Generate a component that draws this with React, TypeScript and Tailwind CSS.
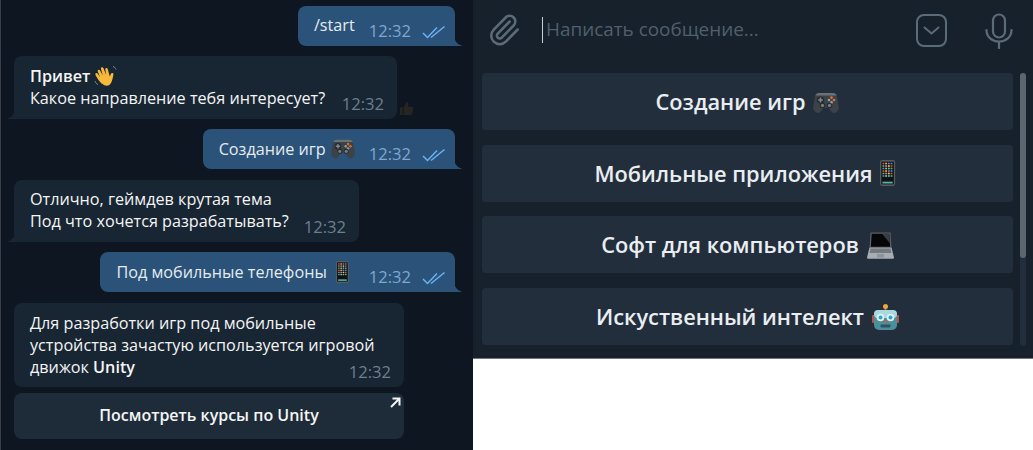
const font = "font-['Open_Sans',sans-serif]";

function Checks() {
  return (
    <svg width="24" height="14" viewBox="0 0 24 14" fill="none" stroke="#6ab2f2" strokeWidth="1.5" className="ml-[11px] mt-[3px] shrink-0">
      <path d="M1 8l4.500 4.500L15 2.500" />
      <path d="M9 12.500L22.500 1.500" />
    </svg>
  );
}

function Gamepad({ size = 24 }: { size?: number }) {
  return (
    <svg width={size} height={size} viewBox="0 0 26 26" className="inline-block shrink-0">
      <path d="M6 3h14c2.500 0 3.500 1.500 4 3.500l1.700 10c.6 3.500-1.700 6.500-4.500 6.500-1.700 0-2.700-1-3.700-2.500L15.500 18h-5l-2 2.500c-1 1.500-2 2.500-3.700 2.500C2 23-.3 20 .3 16.500L2 6.500C2.500 4.500 3.500 3 6 3z" fill="#3c4348" />
      <path d="M6 3h14c2 0 3 1 3.600 2.500H2.400C3 4 4 3 6 3z" fill="#6a7277" />
      <circle cx="7.500" cy="10" r="3.600" fill="#24292d" />
      <path d="M6.700 7.600h1.600v1.600h1.600v1.600H8.300v1.600H6.700v-1.600H5.100V9.200h1.600z" fill="#80888d" />
      <circle cx="18.500" cy="7.600" r="1.300" fill="#ef6c2b" />
      <circle cx="21" cy="10" r="1.300" fill="#ef6c2b" />
      <circle cx="16" cy="10" r="1.300" fill="#969ea3" />
      <circle cx="18.500" cy="12.400" r="1.300" fill="#969ea3" />
      <circle cx="9.500" cy="15.500" r="2.700" fill="#23282c" />
      <circle cx="9.500" cy="15.500" r="1.700" fill="#747c81" />
      <circle cx="16.500" cy="15.500" r="2.700" fill="#23282c" />
      <circle cx="16.500" cy="15.500" r="1.700" fill="#747c81" />
    </svg>
  );
}

function Phone({ h = 24 }: { h?: number }) {
  const colors = ["#d9534f", "#5bc0de", "#f0ad4e", "#5cb85c", "#a06cd5", "#e57ab0", "#4a90d9", "#e8d44d", "#8fd16f"];
  const cells = [];
  for (let r = 0; r < 6; r++) {
    for (let c = 0; c < 4; c++) {
      cells.push(<rect key={`${r}-${c}`} x={2.300 + c * 2.500} y={2.500 + r * 2.300} width="1.700" height="1.500" fill={colors[(r * 3 + c * 2) % 9]} />);
    }
  }
  return (
    <svg width={(h * 14) / 24} height={h} viewBox="0 0 14 24" className="inline-block shrink-0">
      <rect x="0" y="0" width="14" height="24" rx="2" fill="#565c61" />
      <rect x="1.200" y="1.500" width="11.600" height="21" fill="#101214" />
      {cells}
      <rect x="2.300" y="20" width="9.400" height="1.700" fill="#57b2a8" />
    </svg>
  );
}

function Wave() {
  return (
    <svg width="24" height="24" viewBox="0 0 24 24" className="inline-block shrink-0">
      <path d="M8 20c-3-3-5-6-6.500-9-.8-1.700 1.200-2.600 2.200-1.200L6 13 3.800 7.500C3.100 5.800 5.300 5 6.100 6.500L8.800 11.500 7 5c-.5-1.800 1.800-2.400 2.500-.8l2.700 6.800-.9-5.300c-.3-1.800 2-2.200 2.500-.5l2 7.300 1-2.600c.7-1.700 3-1 2.600.8-.8 3.500-1 6-2.400 8.300-2.500 4.200-6.200 3-9 .5z" fill="#f7b83c" />
      <path d="M19 2.500c1.500.5 2.500 1.500 3 3M1 17c.5 1.800 1.500 3 3 3.500" stroke="#7c8894" strokeWidth="1" fill="none" />
    </svg>
  );
}

function Laptop() {
  return (
    <svg width="27" height="27" viewBox="0 0 27 27" className="inline-block shrink-0">
      <path d="M3.500 0.500h20l1 15h-22z" fill="#5a6066" />
      <path d="M4.700 1.800h17.600l.8 13H3.900z" fill="#050607" />
      <path d="M15 1.800h7.300l.6 9.500z" fill="#383d42" />
      <path d="M2.500 15.500h22l2.500 10c0 .8-.5 1.200-1 1.200H1c-.5 0-1-.4-1-1.200z" fill="#a7adb2" />
      <path d="M3.500 16.500h20l1 4.500H2.500z" fill="#73797e" />
      <rect x="10" y="22" width="7" height="3.500" fill="#8e9499" />
    </svg>
  );
}

function Robot() {
  return (
    <svg width="27" height="26" viewBox="0 0 27 26" className="inline-block shrink-0">
      <rect x="12.700" y="3" width="1.600" height="4" fill="#8a8f93" />
      <circle cx="13.500" cy="2.500" r="2.500" fill="#f0a63a" />
      <rect x="0" y="11" width="3.500" height="8" rx="1" fill="#b8514c" />
      <rect x="23.500" y="11" width="3.500" height="8" rx="1" fill="#b8514c" />
      <rect x="2" y="6" width="23" height="20" rx="5" fill="#4b8f9b" />
      <rect x="2" y="6" width="23" height="8" rx="4" fill="#a9d8de" />
      <circle cx="8.500" cy="13.500" r="3.800" fill="#dff2f4" />
      <circle cx="18.500" cy="13.500" r="3.800" fill="#dff2f4" />
      <circle cx="8.500" cy="13.500" r="2" fill="#2fa8c4" />
      <circle cx="18.500" cy="13.500" r="2" fill="#2fa8c4" />
      <path d="M13.500 15l2 3.500h-4z" fill="#d9534f" />
      <rect x="8.500" y="20.500" width="10" height="3" rx="1" fill="#2b5560" />
    </svg>
  );
}

function Thumb() {
  return (
    <svg width="15" height="15" viewBox="0 0 16 16">
      <path d="M1 7h3v8H1zM5 7l3-6c1.500 0 2.200 1 2 2.500L9.500 6H14c1 0 1.500 1 1.300 1.800l-1.300 6c-.2.800-.7 1.200-1.500 1.200H5z" fill="#262522" />
    </svg>
  );
}

function OutBubble({ children, textTop = "mt-[7px]" }: { children: React.ReactNode; textTop?: string }) {
  return (
    <div className="relative self-end mr-[18px] h-[40px] bg-[#2b5278] rounded-tl-[8px] rounded-tr-[8px] rounded-bl-[8px] flex items-start pl-[16px] pr-[9px]">
      <div className={`flex items-center text-[16.200px] text-[#e4ecf2] h-[24px] leading-[24px] whitespace-nowrap ${textTop}`}>{children}</div>
      <span className="ml-[14px] mt-[13px] text-[16.600px] leading-[24px] text-[#7da8d3]">12:32</span>
      <div className="mt-[16px]"><Checks /></div>
      <svg width="8" height="12" viewBox="0 0 8 12" className="absolute -right-[7px] bottom-0">
        <path d="M0 0c0 6 2.500 10 7.500 11.500.5.300.2.500-.5.500H0z" fill="#2b5278" />
      </svg>
    </div>
  );
}

function InBubble({ className, children }: { className: string; children: React.ReactNode }) {
  return (
    <div className={`relative ml-[13px] bg-[#182533] rounded-tl-[8px] rounded-tr-[8px] rounded-br-[8px] pl-[16px] text-[16.200px] text-[#f5f5f5] leading-[22px] ${className}`}>
      {children}
      <svg width="8" height="12" viewBox="0 0 8 12" className="absolute -left-[7px] bottom-0">
        <path d="M8 0c0 6-2.500 10-7.500 11.500-.5.300-.2.500.5.500h7z" fill="#182533" />
      </svg>
    </div>
  );
}

function KeyButton({ children }: { children: React.ReactNode }) {
  return (
    <div className="h-[57px] pt-[2px] flex items-center justify-center gap-[8px] bg-[#232e3c] rounded-[4px] text-[21.800px] font-semibold text-[#e9eef2] whitespace-nowrap">
      {children}
    </div>
  );
}

export default function App() {
  return (
    <div className={`w-[1033px] h-[450px] overflow-hidden flex bg-white ${font}`}>
      {/* Chat column */}
      <div className="w-[473px] h-[450px] bg-[#0e1621] border-l border-[#3b4048] flex flex-col pt-[6px]">
        <OutBubble>/start</OutBubble>

        <InBubble className="mt-[10px] w-[383px] h-[63px] pt-[8px]">
          <div className="flex items-center gap-[4px] h-[23px] font-semibold"><span>Привет</span><Wave /></div>
          <div>Какое направление тебя интересует?</div>
          <span className="absolute right-[13px] bottom-[4px] text-[16.600px] text-[#6d7f8f]">12:32</span>
          <div className="absolute -right-[17px] bottom-[3px]"><Thumb /></div>
        </InBubble>

        <div className="mt-[10px] self-end"><OutBubble textTop="mt-[8px]">Создание игр <span className="ml-[5px] flex"><Gamepad /></span></OutBubble></div>

        <InBubble className="mt-[11px] w-[345px] h-[62px] pt-[8px]">
          <div>Отлично, геймдев крутая тема</div>
          <div>Под что хочется разрабатывать?</div>
          <span className="absolute right-[13px] bottom-[4px] text-[16.600px] text-[#6d7f8f]">12:32</span>
        </InBubble>

        <div className="mt-[10px] self-end"><OutBubble textTop="mt-[8px]">Под мобильные телефоны <span className="ml-[9px] mr-[6px] flex"><Phone h={22} /></span></OutBubble></div>

        <div className="relative mt-[11px] ml-[13px] w-[390px] h-[84px] bg-[#182533] rounded-[8px] pl-[16px] pt-[9px] text-[16.200px] text-[#f5f5f5] leading-[22px]">
          <div>Для разработки игр под мобильные</div>
          <div>устройства зачастую используется игровой</div>
          <div>движок <span className="font-semibold">Unity</span></div>
          <span className="absolute right-[13px] bottom-[4px] text-[16.600px] text-[#6d7f8f]">12:32</span>
        </div>

        <div className="relative mt-[6px] ml-[13px] w-[390px] h-[46px] pb-[3px] bg-[#1e2c3a] rounded-[8px] flex items-center justify-center text-[16px] font-semibold text-[#f5f5f5]">
          Посмотреть курсы по Unity
          <svg width="11" height="11" viewBox="0 0 11 11" className="absolute right-[3px] top-[4px]" fill="none" stroke="#f2f5f7" strokeWidth="2">
            <path d="M2.500 1.500h7v7M9.500 1.500L1 10" />
          </svg>
        </div>
      </div>

      {/* Input panel */}
      <div className="w-[560px] h-[359px] bg-[#17212b] border-b border-[#6f7780] flex flex-col">
        <div className="h-[64px] flex items-center relative pl-[14px]">
          <svg width="34" height="34" viewBox="0 0 24 24" fill="none" stroke="#5b6b78" strokeWidth="1.800" strokeLinecap="round" strokeLinejoin="round" className="shrink-0 -mt-[4px]">
            <path d="m16 6-8.414 8.586a2 2 0 0 0 2.829 2.829l8.414-8.586a4 4 0 1 0-5.657-5.657l-8.379 8.551a6 6 0 1 0 8.485 8.485l8.379-8.551" />
          </svg>
          <div className="ml-[21px] w-px h-[26px] bg-[#c9d0d6] -mt-[5px]" />
          <span className="ml-[3px] text-[18.900px] text-[#505f6e] -mt-[5px]">Написать сообщение...</span>
          <svg width="34" height="34" viewBox="0 0 34 34" fill="none" stroke="#5b6b78" strokeWidth="2" className="ml-auto -mt-[4px] shrink-0">
            <rect x="2" y="2" width="29" height="31" rx="7" />
            <path d="M9.500 14.500l7 6 7-6" strokeLinecap="round" strokeLinejoin="round" />
          </svg>
          <svg width="28" height="36" viewBox="0 0 28 36" fill="none" stroke="#5b6b78" strokeWidth="2.200" className="ml-[36px] mr-[20px] -mt-[2px] shrink-0">
            <rect x="8" y="1.500" width="12" height="23" rx="6" />
            <path d="M1.500 17c0 7 5.500 11.500 12.500 11.500S26.500 24 26.500 17M14 28.500V35" strokeLinecap="round" />
          </svg>
        </div>

        <div className="flex pl-[9px] mt-[9px]">
          <div className="w-[531px] flex flex-col gap-[14.500px]">
            <KeyButton>Создание игр <Gamepad size={26} /></KeyButton>
            <KeyButton>Мобильные приложения <span className="mr-[5px] -mt-[2px] flex"><Phone h={26} /></span></KeyButton>
            <KeyButton>Софт для компьютеров <Laptop /></KeyButton>
            <KeyButton>Искуственный интелект <Robot /></KeyButton>
          </div>
          <div className="ml-[7px] w-[6px] h-[273px] rounded-full bg-[#232e3c]">
            <div className="w-[6px] h-[185px] rounded-full bg-[#5c6670]" />
          </div>
        </div>
      </div>
    </div>
  );
}
